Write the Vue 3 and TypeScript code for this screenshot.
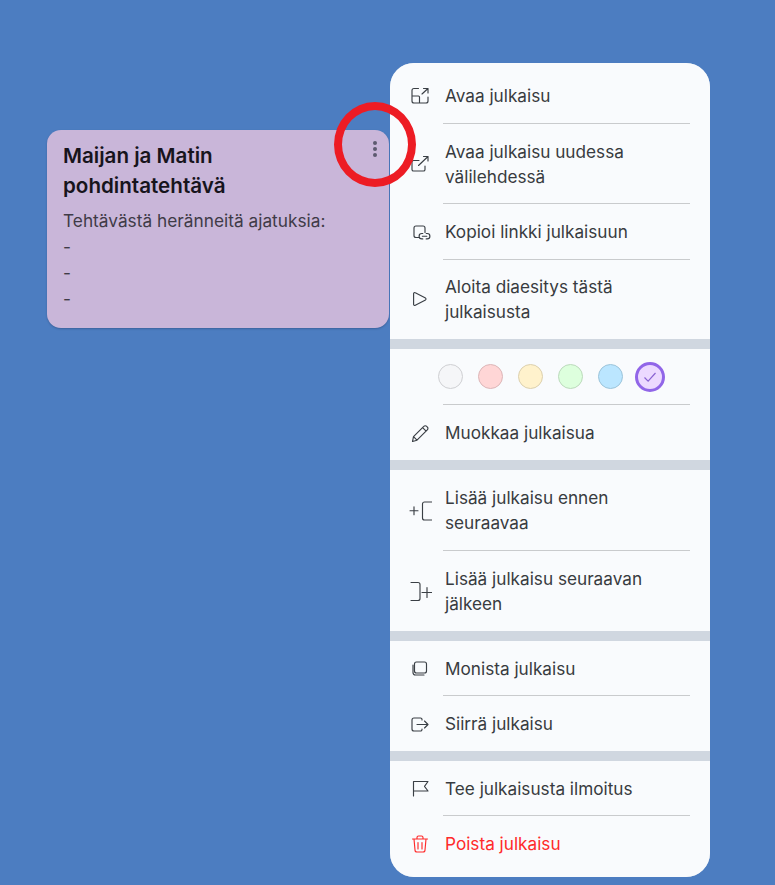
<script setup lang="ts">
interface Item {
  label: string
  icon: string
  danger?: boolean
}

const icons: Record<string, string> = {
  open: 'M10.5 4.5H6a2 2 0 0 0-2 2v10.5a2 2 0 0 0 2 2h12a2 2 0 0 0 2-2V13M4 12h6.5a1 1 0 0 1 1 1v6M14 10l6-5.5M15.5 4.5H20V9',
  tab: 'M11 8.5H5.6A1.6 1.6 0 0 0 4 10.1v7.3A1.6 1.6 0 0 0 5.6 19h9.8a1.6 1.6 0 0 0 1.6-1.6V14M10.5 13.5L20 4.5M15.5 4.5H20V9',
  link: 'M10.5 17.5H8a2 2 0 0 1-2-2V8a2 2 0 0 1 2-2h7a2 2 0 0 1 2 2v4.5M14.8 13.5h-1a2.7 2.7 0 0 0 0 5.4h1M18.2 13.5h1a2.7 2.7 0 0 1 0 5.4h-1M14.4 16.2h4.4',
  play: 'M5.6 6.6v10.8a1.1 1.1 0 0 0 1.7.9l10.2-5.4a1.1 1.1 0 0 0 0-1.8L7.3 5.7a1.1 1.1 0 0 0-1.7.9z',
  pencil: 'M4.5 20.5l1-4.8L15.8 5.4a2 2 0 0 1 2.9 0l.6.6a2 2 0 0 1 0 2.9L9 19.2l-4.5 1.3zM5.5 15.7l3.5 3.5M14.6 6.7l3.5 3.5',
  before: 'M2 12.7h8M6 8.7v8M24 4h-7.5a2 2 0 0 0-2 2v14a2 2 0 0 0 2 2H24',
  after: 'M3 3.5h7a2 2 0 0 1 2 2v14a2 2 0 0 1-2 2H3M14 13.5h10M19 8.5v10',
  copy: 'M8.5 6h8a2 2 0 0 1 2 2v7a2 2 0 0 1-2 2h-8a2 2 0 0 1-2-2V8a2 2 0 0 1 2-2zM5 9v7.5A2.5 2.5 0 0 0 7.5 19H16',
  move: 'M14 8v-.5A1.5 1.5 0 0 0 12.5 6H6a2 2 0 0 0-2 2v9a2 2 0 0 0 2 2h6.5a1.5 1.5 0 0 0 1.5-1.5V17M9 12.5h11M16.5 9l3.5 3.5-3.5 3.5',
  flag: 'M5.5 20V5.5H20l-3.5 4.8 3.5 4.7H5.5',
  trash: 'M4.5 7h15M9 7V5.5A1.5 1.5 0 0 1 10.5 4h3A1.5 1.5 0 0 1 15 5.5V7M6 7l1 11a2 2 0 0 0 2 2h6a2 2 0 0 0 2-2l1-11M10 10.5v6.5M14 10.5v6.5',
}

const groupOne: Item[] = [
  { label: 'Avaa julkaisu', icon: 'open' },
  { label: 'Avaa julkaisu uudessa välilehdessä', icon: 'tab' },
  { label: 'Kopioi linkki julkaisuun', icon: 'link' },
  { label: 'Aloita diaesitys tästä julkaisusta', icon: 'play' },
]
const groupThree: Item[] = [
  { label: 'Lisää julkaisu ennen seuraavaa', icon: 'before' },
  { label: 'Lisää julkaisu seuraavan jälkeen', icon: 'after' },
]
const groupFour: Item[] = [
  { label: 'Monista julkaisu', icon: 'copy' },
  { label: 'Siirrä julkaisu', icon: 'move' },
]
const groupFive: Item[] = [
  { label: 'Tee julkaisusta ilmoitus', icon: 'flag' },
  { label: 'Poista julkaisu', icon: 'trash', danger: true },
]
const groups = [groupOne, groupThree, groupFour, groupFive]

const swatches = [
  { bg: '#f5f6f8', border: '#cfd0d3' },
  { bg: '#ffd6d6', border: '#dcb6b8' },
  { bg: '#fff2cc', border: '#dcd0ae' },
  { bg: '#ddffdd', border: '#bcdabc' },
  { bg: '#bbe6ff', border: '#9cc4da' },
]
</script>

<template>
  <div class="page">
    <div class="card">
      <div class="card-head">
        <h2 class="card-title">Maijan ja Matin pohdintatehtävä</h2>
        <span class="dots"><i></i><i></i><i></i></span>
      </div>
      <p class="card-line">Tehtävästä heränneitä ajatuksia:</p>
      <p class="card-line">-</p>
      <p class="card-line">-</p>
      <p class="card-line">-</p>
    </div>

    <div class="menu">
      <template v-for="(group, g) in groups" :key="g">
        <div v-if="g === 1" class="group">
          <div class="swatches">
            <span
              v-for="s in swatches"
              :key="s.bg"
              class="swatch"
              :style="{ background: s.bg, borderColor: s.border }"
            ></span>
            <span class="swatch selected">
              <svg width="14" height="12" viewBox="0 0 14 12" fill="none">
                <path d="M1.5 6.5l3.6 3.6L12.5 2" stroke="#8a63d2" stroke-width="1.2" />
              </svg>
            </span>
          </div>
          <div class="sep"></div>
          <div class="row">
            <svg class="icon" width="24" height="24" viewBox="0 0 24 24" fill="none">
              <path :d="icons.pencil" />
            </svg>
            <span>Muokkaa julkaisua</span>
          </div>
        </div>
        <div class="group" :class="{ first: g === 0, tall: g === 1, last: g === 3 }">
          <template v-for="(item, i) in group" :key="item.label">
            <div v-if="i > 0" class="sep"></div>
            <div class="row" :class="{ danger: item.danger }">
              <svg class="icon" width="24" height="24" viewBox="0 0 24 24" fill="none">
                <path :d="icons[item.icon]" />
              </svg>
              <span>{{ item.label }}</span>
            </div>
          </template>
        </div>
      </template>
    </div>

    <!-- hand drawn marker on top of the screenshot -->
    <div class="marker"></div>
  </div>
</template>

<style scoped>
.page {
  position: relative;
  display: flex;
  align-items: flex-start;
  gap: 1px;
  box-sizing: border-box;
  width: 775px;
  height: 885px;
  padding: 63px 0 0 47px;
  overflow: hidden;
  background: #4c7dc1;
  font-family: Inter, "Noto Sans", sans-serif;
}

.card {
  box-sizing: border-box;
  width: 342px;
  height: 198px;
  margin-top: 67px;
  padding: 11px 16px 0;
  border-radius: 14px;
  background: #c9b6d9;
  box-shadow: 0 1px 2px rgba(30, 50, 90, 0.35);
}
.card-head {
  display: flex;
  justify-content: space-between;
  margin-bottom: 7px;
}
.card-title {
  width: 230px;
  margin: 0;
  font-size: 20.6px;
  font-weight: 600;
  line-height: 30px;
  color: #17141c;
}
.dots {
  display: flex;
  flex-direction: column;
  gap: 2px;
  width: 22px;
  margin-right: -13px;
  align-items: center;
}
.dots i {
  display: block;
  width: 4px;
  height: 4px;
  border-radius: 50%;
  background: #5d5a70;
}
.card-line {
  margin: 0;
  font-size: 17.3px;
  line-height: 26px;
  color: #3f3b47;
}

.menu {
  flex: none;
  display: flex;
  flex-direction: column;
  gap: 10px;
  width: 320px;
  height: 814px;
  border-radius: 24px;
  overflow: hidden;
  background: #d0d7e0;
}
.group {
  background: #f9fbfd;
}
.group.first {
  padding-top: 5.6px;
}
.group.first .row {
  padding-top: 14.7px;
  padding-bottom: 14.7px;
}
.group.last {
  flex: 1;
}
.row {
  display: flex;
  align-items: center;
  box-sizing: border-box;
  padding: 14.75px 20px 14.75px 0;
  font-size: 17.2px;
  line-height: 25px;
  color: #383b40;
}
.group.tall .row {
  padding-top: 15.05px;
  padding-bottom: 15.05px;
}
.row.danger {
  color: #ff2a2a;
}
.icon {
  flex: none;
  margin: 0 13px 0 18px;
  stroke: #3a3f45;
  stroke-width: 1.15;
  stroke-linecap: round;
  stroke-linejoin: round;
}
.danger .icon {
  stroke: #ff2a2a;
}
.sep {
  height: 1px;
  margin: 0 20px 0 53px;
  background: #c9cbcd;
}
.swatches {
  display: flex;
  align-items: center;
  gap: 15px;
  height: 55.2px;
  padding-left: 48px;
}
.swatch {
  box-sizing: border-box;
  flex: none;
  width: 25px;
  height: 25px;
  border: 1px solid;
  border-radius: 50%;
}
.swatch.selected {
  display: flex;
  align-items: center;
  justify-content: center;
  width: 30px;
  height: 30px;
  margin-left: -3px;
  border: 3px solid #9166e8;
  background: #ecd9ff;
}

.marker {
  position: absolute;
  left: 334px;
  top: 102px;
  box-sizing: border-box;
  width: 82px;
  height: 85px;
  border: 8px solid #ed1c24;
  border-radius: 50%;
}
</style>

<style>
html,
body {
  margin: 0;
  background: #4c7dc1;
}
</style>
